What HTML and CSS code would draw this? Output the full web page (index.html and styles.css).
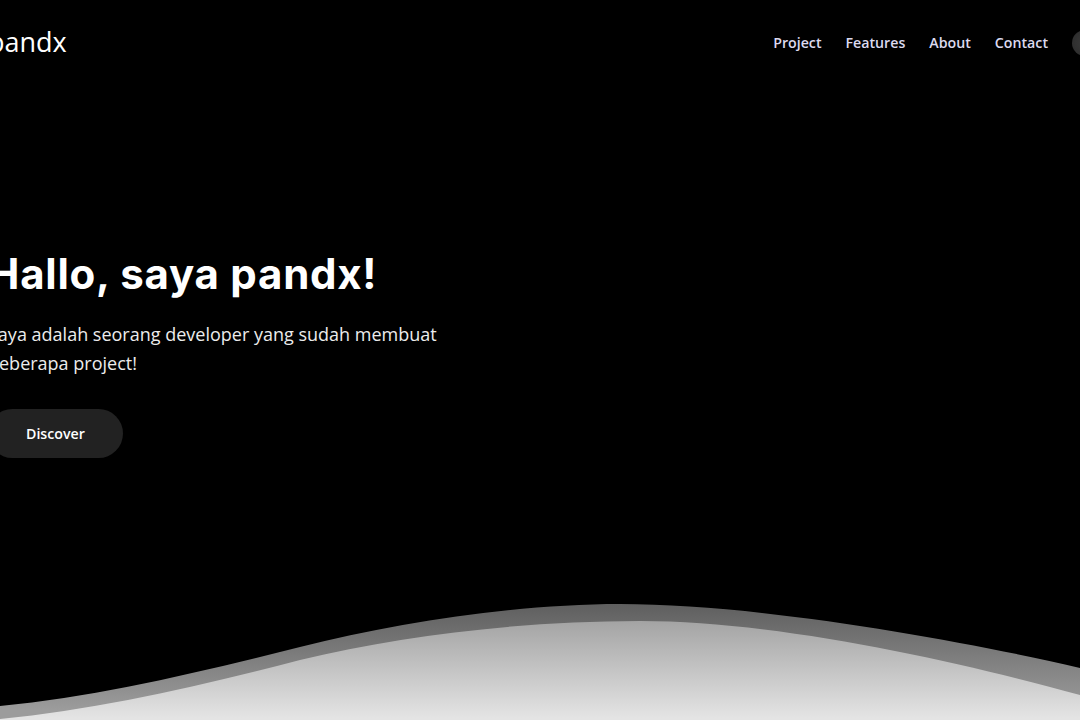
FILE: index.html
```html
<!DOCTYPE html>
<html lang="id">
<head>
<meta charset="utf-8">
<title>pandx</title>
<link rel="stylesheet" href="styles.css">
</head>
<body>
<div class="page">
  <header class="header">
    <a class="logo" href="#">pandx</a>
    <nav class="nav">
      <a class="nav-link" href="#">Project</a>
      <a class="nav-link" href="#">Features</a>
      <a class="nav-link" href="#">About</a>
      <a class="nav-link" href="#">Contact</a>
      <button class="theme-toggle" aria-label="Toggle theme"></button>
    </nav>
  </header>

  <main class="hero">
    <h1 class="hero-title">Hallo, saya pandx!</h1>
    <p class="hero-text">Saya adalah seorang developer yang sudah membuat beberapa project!</p>
    <a class="btn" href="#">Discover</a>
  </main>

  <svg class="wave" viewBox="0 0 1080 130" preserveAspectRatio="none" aria-hidden="true">
    <defs>
      <linearGradient id="band" gradientUnits="userSpaceOnUse" x1="0" y1="14" x2="0" y2="120">
        <stop offset="0" stop-color="#5f5f5f"/>
        <stop offset="1" stop-color="#9c9c9c"/>
      </linearGradient>
      <linearGradient id="front" gradientUnits="userSpaceOnUse" x1="0" y1="30" x2="0" y2="128">
        <stop offset="0" stop-color="#a3a3a3"/>
        <stop offset="1" stop-color="#e4e4e4"/>
      </linearGradient>
    </defs>
    <path fill="url(#band)" d="M0 116 C100 106 200 82 300 57 C400 32 520 14 620 14 C760 14 960 50 1080 78 L1080 130 L0 130 Z"/>
    <path fill="url(#front)" d="M0 129 C100 119 200 96 300 70 C400 46 520 31 640 31 C780 31 960 72 1080 105 L1080 130 L0 130 Z"/>
  </svg>
</div>
</body>
</html>
```

FILE: styles.css
```css
* {
  box-sizing: border-box;
}

html, body {
  margin: 0;
  padding: 0;
  background: #000;
  overflow: hidden;
}

body {
  font-family: "Open Sans", "Noto Sans", sans-serif;
  color: #fff;
}

.page {
  height: 720px;
  display: flex;
  flex-direction: column;
}

.header {
  height: 84px;
  display: flex;
  align-items: center;
  justify-content: space-between;
  margin: 0 -18px 0 -12px;
}

.logo {
  font-size: 27px;
  font-weight: 400;
  color: #fff;
  text-decoration: none;
  line-height: 1;
  margin-top: -2px;
}

.nav {
  display: flex;
  align-items: center;
  gap: 24px;
  padding-top: 1px;
}

.nav-link {
  font-size: 14.2px;
  font-weight: 600;
  color: #dcdaef;
  text-decoration: none;
  line-height: 20px;
}

.theme-toggle {
  width: 26px;
  height: 26px;
  border-radius: 50%;
  border: none;
  padding: 0;
  background: radial-gradient(circle at 50% 50%, #3a3a3a, #2a2a2a);
}

.hero {
  margin-left: -12px;
  padding-top: 165px;
  display: flex;
  flex-direction: column;
  align-items: flex-start;
}

.hero-title {
  font-family: "Inter", "Open Sans", sans-serif;
  font-weight: 700;
  font-size: 42px;
  line-height: 50px;
  letter-spacing: 0.75px;
  margin: 0 0 21px 0;
  color: #fff;
}

.hero-text {
  font-size: 18px;
  line-height: 28.5px;
  color: #ececec;
  width: 460px;
  margin: 0 0 32px 0;
}

.btn {
  display: inline-block;
  background: #222222;
  color: #fff;
  font-size: 14.2px;
  font-weight: 600;
  line-height: 19px;
  padding: 15px 38px;
  border-radius: 25px;
  text-decoration: none;
}

.wave {
  display: block;
  margin-top: auto;
  width: 1080px;
  height: 130px;
}
```
